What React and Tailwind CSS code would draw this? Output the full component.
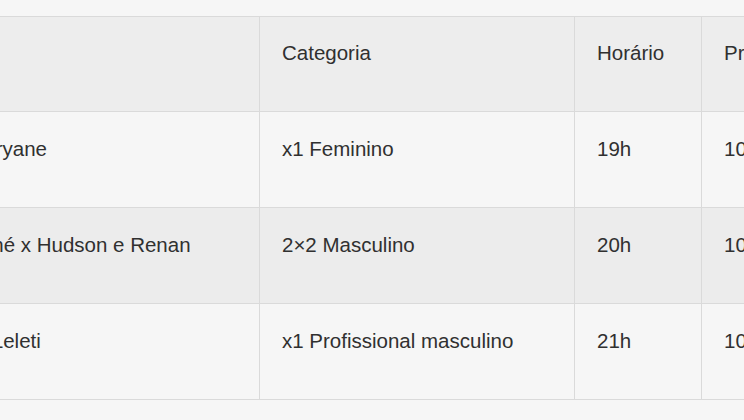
import React from 'react';

const rows = [
  { dupla: 'Bryane', categoria: 'x1 Feminino', horario: '19h', premio: '100 reais', bg: 'bg-[#f6f6f6]' },
  { dupla: 'shé x Hudson e Renan', categoria: '2×2 Masculino', horario: '20h', premio: '100 reais', bg: 'bg-[#ececec]' },
  { dupla: '\u00a0\u2009Leleti', categoria: 'x1 Profissional masculino', horario: '21h', premio: '100 reais', bg: 'bg-[#f6f6f6]' },
];

const base = 'border border-[#dadada] align-top text-left font-normal px-[22px] whitespace-nowrap overflow-hidden';
const head = base + ' pt-[21px] h-[95px]';
const cell = base + ' pt-[22px] h-[96px]';

export default function App() {
  return (
    <div
      className="w-[744px] h-[420px] overflow-hidden bg-[#f6f6f6] pt-[16px] text-[#303030] text-[20.5px] leading-[1.5]"
      style={{ fontFamily: '"Liberation Sans", Arial, sans-serif' }}
    >
      <table className="-ml-[41px] table-fixed border-collapse w-[956px]">
        <colgroup>
          <col className="w-[300px]" />
          <col className="w-[315px]" />
          <col className="w-[127px]" />
          <col className="w-[214px]" />
        </colgroup>
        <thead>
          <tr className="bg-[#ededed]">
            <th className={head}></th>
            <th className={head}>Categoria</th>
            <th className={head}>Horário</th>
            <th className={head}>Prêmio</th>
          </tr>
        </thead>
        <tbody>
          {rows.map((row) => (
            <tr key={row.categoria} className={row.bg}>
              <td className={cell}>{row.dupla}</td>
              <td className={cell}>{row.categoria}</td>
              <td className={cell}>{row.horario}</td>
              <td className={cell}>{row.premio}</td>
            </tr>
          ))}
        </tbody>
      </table>
    </div>
  );
}
